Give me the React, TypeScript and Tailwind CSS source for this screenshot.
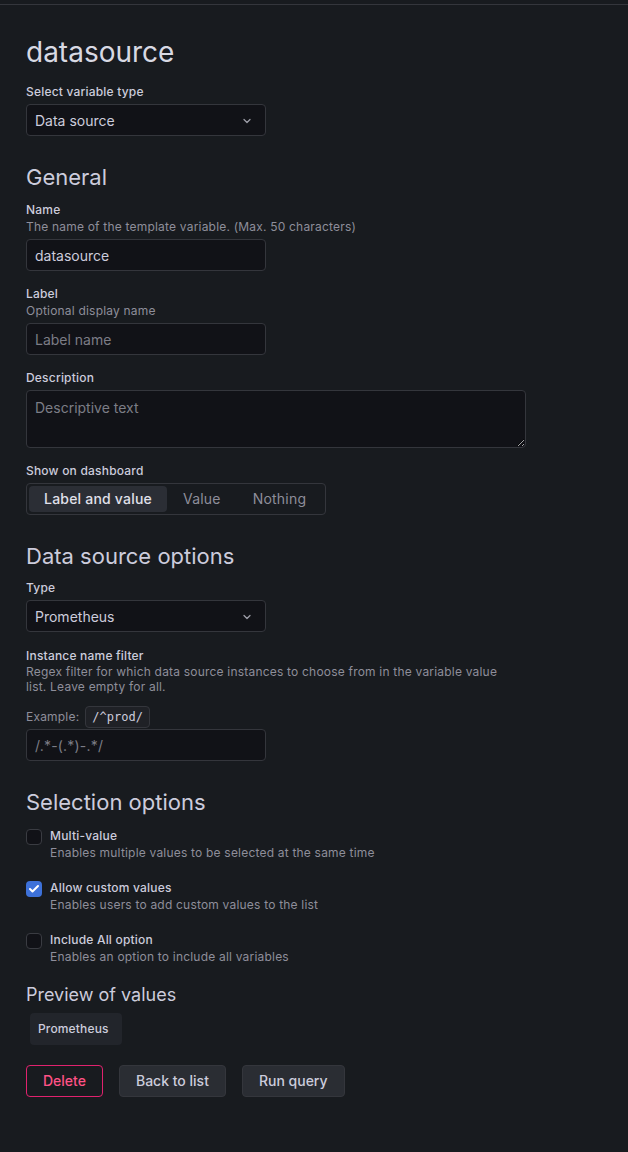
import { Check, ChevronDown } from "lucide-react";

const Label = ({ title, desc }: { title: string; desc?: string }) => (
  <div className="mb-1 tracking-[0.0125em]">
    <div className="text-xs font-medium leading-4 text-[#ccccdc]">{title}</div>
    {desc && <div className="text-xs leading-[17px] text-[#8e8e9a]">{desc}</div>}
  </div>
);

const Select = ({ value }: { value: string }) => (
  <div className="flex h-8 w-[240px] items-center justify-between rounded-sm border border-[#34363c] bg-[#111217] pl-2 pr-3 pt-px text-sm text-[#ccccdc]">
    <span>{value}</span>
    <ChevronDown size={12} strokeWidth={2.5} className="text-[#9d9ea8]" />
  </div>
);

const Input = ({ value, placeholder }: { value?: string; placeholder?: string }) => (
  <input
    readOnly
    value={value}
    placeholder={placeholder}
    className="block h-8 w-[240px] rounded-sm border border-[#34363c] bg-[#111217] px-2 text-sm text-[#ccccdc] outline-none placeholder:text-[#7c7d86]"
  />
);

const checks = [
  { title: "Multi-value", desc: "Enables multiple values to be selected at the same time", on: false },
  { title: "Allow custom values", desc: "Enables users to add custom values to the list", on: true },
  { title: "Include All option", desc: "Enables an option to include all variables", on: false },
];

const App = () => {
  return (
    <div className="min-h-[1152px] bg-[#181b1f] pt-1 font-['Inter',sans-serif] text-[#ccccdc]">
      <div className="border-t border-[#34363c]" />
      <div className="px-[26px]">
        <h1 className="mt-[30px] text-[28px] leading-[34px] text-[#d8d9e3]">datasource</h1>

        <div className="mt-[15px]">
          <Label title="Select variable type" />
          <Select value="Data source" />
        </div>

        <h2 className="mt-[28px] text-[22px] leading-[26px]">General</h2>

        <div className="mt-3">
          <Label title="Name" desc="The name of the template variable. (Max. 50 characters)" />
          <Input value="datasource" />
        </div>

        <div className="mt-[15px]">
          <Label title="Label" desc="Optional display name" />
          <Input placeholder="Label name" />
        </div>

        <div className="mt-[15px]">
          <Label title="Description" />
          <textarea
            readOnly
            placeholder="Descriptive text"
            className="block h-[58px] w-[500px] resize-y rounded-sm border border-[#34363c] bg-[#111217] px-2 py-[7px] text-sm text-[#ccccdc] outline-none placeholder:text-[#7c7d86]"
          />
        </div>

        <div className="mt-[15px]">
          <Label title="Show on dashboard" />
          <div className="flex h-8 w-[300px] items-center rounded-sm border border-[#34363c] p-0.5 text-sm tracking-[0.015em]">
            <div className="flex h-full items-center rounded-sm bg-[#2b2e35] px-[15px] font-medium text-[#e0e0ea]">Label and value</div>
            <div className="flex h-full items-center px-4 text-[#8e8e9a]">Value</div>
            <div className="flex h-full items-center px-4 text-[#8e8e9a]">Nothing</div>
          </div>
        </div>

        <h2 className="mt-[28px] text-[22px] leading-[26px]">Data source options</h2>

        <div className="mt-[11px]">
          <Label title="Type" />
          <Select value="Prometheus" />
        </div>

        <div className="mt-4 tracking-[0.0125em]">
          <div className="text-xs font-medium leading-4">Instance name filter</div>
          <div className="max-w-[480px] text-xs leading-[15px] text-[#8e8e9a]">
            Regex filter for which data source instances to choose from in the variable value list. Leave empty for all.
          </div>
          <div className="mt-3 mb-px flex h-[22px] items-center gap-1.5 text-xs text-[#8e8e9a]">
            <span>Example:</span>
            <code className="flex h-[22px] items-center rounded border border-[#34363c] bg-[#1f2126] px-1.5 font-['DejaVu_Sans_Mono',monospace] text-xs tracking-normal text-[#ccccdc]">/^prod/</code>
          </div>
          <Input placeholder="/.*-(.*)-.*/" />
        </div>

        <h2 className="mt-[28px] text-[22px] leading-[26px]">Selection options</h2>

        <div className="mt-3 flex flex-col gap-[18px] tracking-[0.0125em]">
          {checks.map((c, i) => (
            <div key={i} className="flex gap-2">
              <div
                className={
                  c.on
                    ? "mt-0.5 flex h-4 w-4 shrink-0 items-center justify-center rounded-sm bg-[#3d71d9]"
                    : "mt-0.5 h-4 w-4 shrink-0 rounded-sm border border-[#3a3c42] bg-[#111217]"
                }
              >
                {c.on && <Check size={12} strokeWidth={4} className="text-white" />}
              </div>
              <div>
                <div className="text-xs font-medium leading-[18px]">{c.title}</div>
                <div className="text-xs leading-4 text-[#8e8e9a]">{c.desc}</div>
              </div>
            </div>
          ))}
        </div>

        <h4 className="mt-[19px] text-lg leading-[22px]">Preview of values</h4>
        <div className="mt-[7px] ml-1 inline-flex h-8 items-center rounded-sm bg-[#22252b] pl-2 pr-[13px] text-xs font-medium tracking-[0.0125em]">
          Prometheus
        </div>

        <div className="mt-5 flex gap-4 text-sm font-medium">
          <button className="h-8 rounded-sm border border-[#e0226e] px-4 text-[#ff5286]">Delete</button>
          <button className="h-8 rounded-sm border border-[#34363c] bg-[#2a2d33] px-4">Back to list</button>
          <button className="h-8 rounded-sm border border-[#34363c] bg-[#2a2d33] px-4">Run query</button>
        </div>
      </div>
    </div>
  );
};

export default App;
